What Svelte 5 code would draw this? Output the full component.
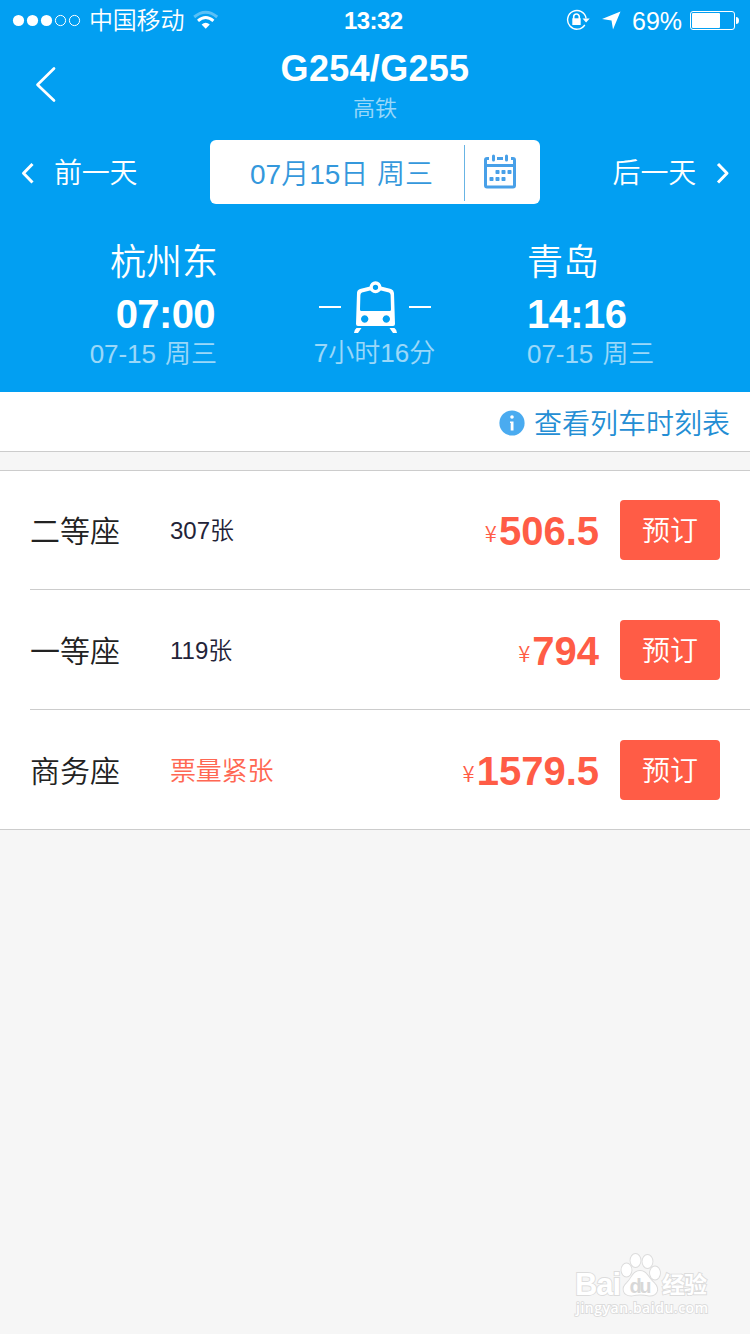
<script>
  const seats = [
    { name: '二等座', left: '307张', price: '506.5', scarce: false },
    { name: '一等座', left: '119张', price: '794', scarce: false },
    { name: '商务座', left: '票量紧张', price: '1579.5', scarce: true }
  ];
</script>

<div class="screen">
  <header>
    <div class="status">
      <svg class="signal" width="70" height="14" viewBox="0 0 70 14">
        <g fill="#fff"><circle cx="6.5" cy="7.5" r="5.6" /><circle cx="20.5" cy="7.5" r="5.6" /><circle cx="34.5" cy="7.5" r="5.6" /></g>
        <g fill="none" stroke="#fff"><circle cx="48.5" cy="7.5" r="5.100" /><circle cx="62.5" cy="7.5" r="5.100" /></g>
      </svg>
      <span class="carrier">中国移动</span>
      <svg class="wifi" width="26" height="20" viewBox="0 0 26 20" fill="none" stroke="#fff" stroke-width="3">
        <path d="M1.2 7Q12.7-2.500 24.200 7" opacity=".35" />
        <path d="M5 10.900Q12.7 4.200 20.4 10.900" />
        <path d="M8.600 14.600Q12.7 11 16.800 14.600L12.7 18.800Z" fill="#fff" stroke="none" />
      </svg>
      <span class="clock">13:32</span>
      <svg class="lock" width="25" height="22" viewBox="0 0 25 22">
        <path d="M18.800 15.800A9.300 9.300 0 1 1 20.100 9.500" fill="none" stroke="#fff" stroke-width="1.400" />
        <path d="M16.500 9.600h7.200l-3.600 3.900z" fill="#fff" />
        <path d="M7.700 10V7.800a2.800 2.800 0 0 1 5.600 0V10" fill="none" stroke="#fff" stroke-width="1.600" />
        <rect x="6.300" y="9.300" width="8.400" height="6.700" fill="#fff" />
      </svg>
      <svg class="arrow" width="19" height="19" viewBox="0 0 19 19"><path d="M18.500.5L11 18.500L9.500 9.500L0 8Z" fill="#fff" /></svg>
      <span class="percent">69%</span>
      <svg class="battery" width="50" height="20" viewBox="0 0 50 20">
        <rect x=".5" y="1.500" width="44" height="18" rx="2.500" fill="none" stroke="#fff" />
        <rect x="2" y="3" width="28" height="15" rx="1" fill="#fff" />
        <path d="M46 7q3 0 3 3.500t-3 3.500z" fill="#fff" />
      </svg>
    </div>

    <div class="nav">
      <svg width="24" height="38" viewBox="0 0 24 38" fill="none" stroke="#fff" stroke-width="2.700" stroke-linecap="round" stroke-linejoin="round"><path d="M19 3.500L2.500 19.700L19 35.500" /></svg>
      <div class="heading">
        <h1>G254/G255</h1>
        <p>高铁</p>
      </div>
    </div>

    <div class="dates">
      <div class="prev">
        <svg width="16" height="24" viewBox="0 0 16 24" fill="none" stroke="#fff" stroke-width="3" stroke-linejoin="round"><path d="M12.500 3L3.500 12.300L12.500 21.500" /></svg>
        <span>前一天</span>
      </div>
      <div class="picker">
        <span class="date">07月15日 周三</span>
        <span class="calendar">
          <svg width="34" height="36" viewBox="0 0 34 36">
            <g fill="none" stroke="#48a0e8">
              <path d="M6 4.500H4A1.500 1.500 0 0 0 2.500 6V31.500A1.500 1.500 0 0 0 4 33H30A1.500 1.500 0 0 0 31.500 31.500V6A1.500 1.500 0 0 0 30 4.500H28M14 4.500H20M2.500 11.500H31.500" stroke-width="3" />
              <path d="M10.500 2V6M23.500 2V6" stroke-width="3" stroke-linecap="round" />
            </g>
            <g fill="#48a0e8">
              <rect x="12.500" y="16" width="4" height="4" rx=".7" /><rect x="18.500" y="16" width="4" height="4" rx=".7" /><rect x="24.500" y="16" width="4" height="4" rx=".7" />
              <rect x="6.500" y="23" width="4" height="4" rx=".7" /><rect x="12.500" y="23" width="4" height="4" rx=".7" /><rect x="18.500" y="23" width="4" height="4" rx=".7" />
            </g>
          </svg>
        </span>
      </div>
      <div class="next">
        <span>后一天</span>
        <svg width="16" height="24" viewBox="0 0 16 24" fill="none" stroke="#fff" stroke-width="3" stroke-linejoin="round"><path d="M3 3L12 12.300L3 21.500" /></svg>
      </div>
    </div>

    <div class="trip">
      <div class="stop from">
        <span class="station">杭州东</span>
        <span class="time">07:00</span>
        <span class="day">07-15 周三</span>
      </div>
      <div class="middle">
        <svg width="114" height="54" viewBox="0 0 114 54">
          <path d="M1 27H23M91 27H113" stroke="#fff" stroke-width="2" />
          <path fill="#fff" fill-rule="evenodd" d="M42 9L52 6.500H63L73 9Q75.800 10 76 13L77 44Q77 46 75 46H40Q38 46 38 44L39 13Q39 10 42 9ZM44 12.500Q42.500 13 42.400 15L42 29.500Q42 31 43.500 31H71.500Q73 31 73 29.500L72.600 15Q72.500 13 71 12.500L63 10.500H52ZM46.700 35.300a3.700 3.700 0 1 0 .01 0ZM68.300 35.300a3.700 3.700 0 1 0 .01 0Z" />
          <circle cx="57.500" cy="7.300" r="4.300" fill="#029ff2" stroke="#fff" stroke-width="3.300" />
          <path d="M38.500 48H43.500L40 53H36Q36 50 38.500 48ZM71.500 48H76.500Q79 50 79 53H75Z" fill="#fff" />
        </svg>
        <span class="duration">7小时16分</span>
      </div>
      <div class="stop to">
        <span class="station">青岛</span>
        <span class="time">14:16</span>
        <span class="day">07-15 周三</span>
      </div>
    </div>
  </header>

  <div class="schedule">
    <svg width="26" height="26" viewBox="0 0 26 26">
      <circle cx="13" cy="13" r="12.600" fill="#4aabf0" />
      <circle cx="13" cy="7" r="1.800" fill="#fff" /><path d="M11 11.500H14.500V20.500H11.700V13H11Z" fill="#fff" />
    </svg>
    <span>查看列车时刻表</span>
  </div>

  <div class="seats">
    {#each seats as seat}
      <div class="seat">
        <span class="name">{seat.name}</span>
        <span class="count" class:scarce={seat.scarce}>{seat.left}</span>
        <span class="price"><i>¥</i><b>{seat.price}</b></span>
        <button>预订</button>
      </div>
    {/each}
  </div>

  <svg class="watermark" width="150" height="74" viewBox="0 0 150 74">
    <g fill="#fff" stroke="#dcdcdc" stroke-width="1.800" paint-order="stroke">
      <ellipse cx="55.500" cy="20" rx="5" ry="6.500" /><ellipse cx="64.500" cy="10.500" rx="5" ry="6.500" />
      <ellipse cx="76.500" cy="11.500" rx="5" ry="6.500" /><ellipse cx="84" cy="23" rx="5" ry="6.500" />
      <path d="M69 21C76 21 77 28 83 33C89 39 86 46 78 45.500Q69 43.500 61 45.500C52 46 50 38 56 33C61 28 62 21 69 21Z" />
      <text x="4" y="45" class="mark" textLength="46">Bai</text>
      <text x="91" y="43" class="cn" textLength="45">经验</text>
      <text x="5" y="63" class="url" textLength="132">jingyan.baidu.com</text>
    </g>
    <text x="58.500" y="42.500" class="du" textLength="22">du</text>
  </svg>
</div>

<style>
  :global(body) { background: #f6f6f6; }
  .screen {
    position: relative;
    width: 750px;
    height: 1334px;
    overflow: hidden;
    background: #f6f6f6;
    font-family: "Liberation Sans", "Noto Sans CJK SC", sans-serif;
    font-weight: 350;
    color: #fff;
  }
  svg { display: block; flex: none; }
  span { white-space: nowrap; }
  header { height: 392px; background: #029ff2; }

  .status { display: flex; align-items: center; height: 40px; padding: 0 10px 0 12px; }
  .carrier { margin-left: 7px; font-size: 24px; line-height: 40px; width: 96px; padding-top: 2px; letter-spacing: -0.2px; }
  .wifi { margin-left: 8px; }
  .clock { margin-left: 125px; width: 60px; font-size: 24px; line-height: 42px; font-weight: 700; letter-spacing: -0.6px; padding-top: 1px; }
  .lock { margin-left: auto; }
  .arrow { margin-left: 11px; }
  .percent { margin-left: 11px; width: 51px; font-size: 25px; line-height: 42px; padding-top: 2px; }
  .battery { margin-left: 7px; }

  .nav { display: flex; height: 100px; padding-left: 35px; }
  .nav > svg { margin-top: 25px; }
  .heading { flex: 1; padding-right: 59px; text-align: center; }
  h1 { margin: 8px 0 0; font-size: 36px; line-height: 42px; font-weight: 700; letter-spacing: 0.3px; }
  p { margin: 4px 0 0; font-size: 22px; line-height: 30px; opacity: .6; }

  .dates { display: grid; grid-template-columns: 210px 330px 210px; height: 64px; font-size: 28px; line-height: 66px; }
  .prev, .next { display: flex; align-items: center; height: 66px; }
  .prev span, .next span { padding-top: 2px; letter-spacing: -0.2px; }
  .prev { padding-left: 20px; gap: 18px; }
  .next { justify-content: flex-end; padding-right: 19px; gap: 19px; }
  .picker { display: flex; align-items: center; height: 64px; background: #fff; border-radius: 6px; color: #3498dc; }
  .date { width: 254px; padding: 5px 0 0 40px; box-sizing: border-box; font-size: 28px; line-height: 61px; word-spacing: 1px; }
  .calendar { display: flex; align-items: center; height: 56px; margin-top: 2px; padding: 0 0 3px 18px; box-sizing: border-box; border-left: 1px solid #68b4e4; }

  .trip { display: grid; grid-template-columns: 217px 315px 218px; height: 152px; margin-top: 36px; }
  .stop { display: flex; flex-direction: column; }
  .from { align-items: flex-end; }
  .to { align-items: flex-start; margin-left: -5px; }
  .station { font-size: 36px; line-height: 44px; padding-top: 1px; margin-bottom: -1px; }
  .from .station { margin-right: -1px; }
  .time { font-size: 40px; line-height: 60px; font-weight: 700; letter-spacing: -0.6px; }
  .from .time { margin-right: 2px; }
  .day { font-size: 26px; line-height: 20px; opacity: .6; word-spacing: 2px; letter-spacing: -0.05px; }
  .middle { display: flex; flex-direction: column; align-items: center; padding-top: 40px; }
  .duration { font-size: 26px; line-height: 38px; opacity: .6; }

  .schedule {
    display: flex; align-items: center; justify-content: flex-end; gap: 9px;
    height: 60px; box-sizing: border-box; padding: 3px 20px 0 0;
    background: #fff; border-bottom: 1px solid #ccc;
    color: #248ed4; font-size: 28px; line-height: 56px;
  }
  .schedule span { padding-top: 4px; }

  .seats { margin-top: 18px; padding-left: 30px; background: #fff; border: solid #ccc; border-width: 1px 0; }
  .seat { display: flex; align-items: flex-start; height: 120px; box-sizing: border-box; padding: 30px 30px 0 0; }
  .seat + .seat { border-top: 1px solid #ccc; padding-top: 29px; }
  .seat:first-child { height: 118px; padding-top: 29px; }
  .seat:last-child { height: 120px; }
  .name { width: 140px; font-size: 30px; line-height: 64px; color: #222; }
  .count { font-size: 24px; line-height: 62px; color: #232338; }
  .seat + .seat .count { line-height: 64px; }
  .seat + .seat .name { line-height: 65px; }
  .count.scarce { font-size: 26px; color: #ff5c46; opacity: .93; letter-spacing: -0.2px; }
  .price { display: flex; margin-left: auto; color: #ff5c46; }
  i { font: 350 22px/65px "Noto Sans CJK SC", sans-serif; margin-right: 2px; }
  b { font-size: 40px; line-height: 62px; font-weight: 700; }
  .seat + .seat b { line-height: 64px; }
  .seat + .seat i { line-height: 67px; }
  button {
    width: 100px; height: 60px; margin: 0 0 0 21px; padding: 4px 0 0; border: 0; border-radius: 4px;
    background: #ff5c46; color: #fff; font: 350 28px/56px "Liberation Sans", "Noto Sans CJK SC", sans-serif;
  }
  .seat + .seat button { margin-top: 1px; }

  .watermark { position: absolute; left: 571px; top: 1250px; font-family: "Liberation Sans", "Noto Sans CJK SC", sans-serif; }
  .mark { font-size: 31px; font-weight: 700; }
  .cn { font-size: 23px; font-weight: 700; }
  .url { font-family: "Open Sans", sans-serif; font-size: 14px; font-weight: 600; }
  .du { font-size: 20px; font-weight: 700; fill: #d8d8d8; }
</style>
